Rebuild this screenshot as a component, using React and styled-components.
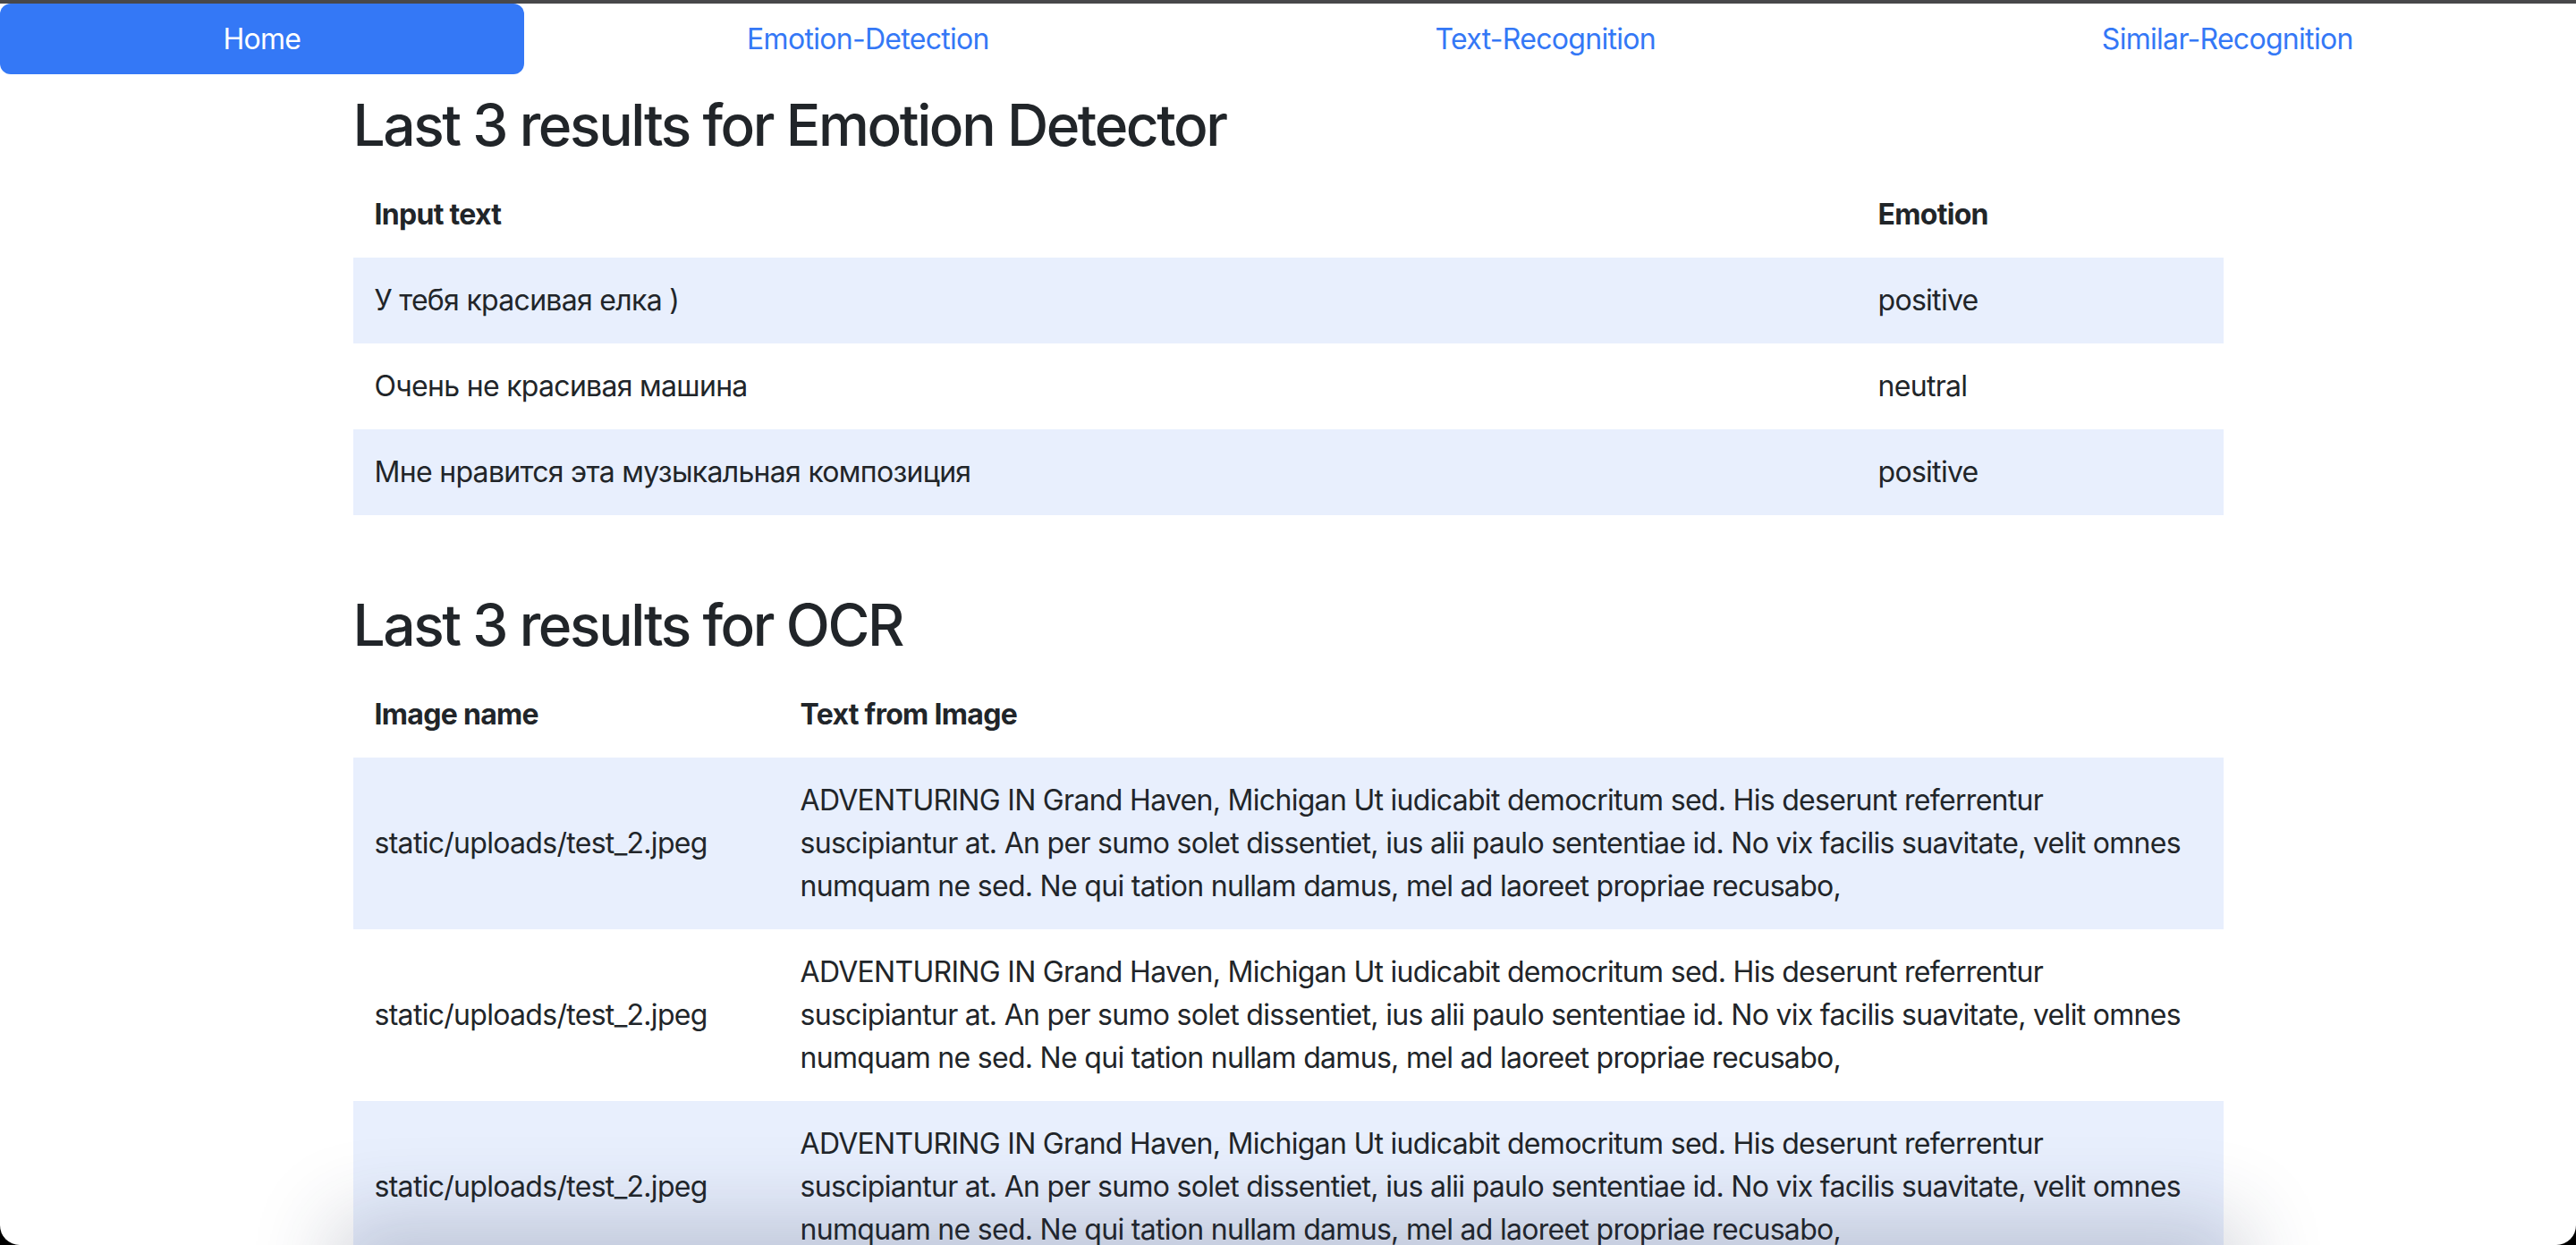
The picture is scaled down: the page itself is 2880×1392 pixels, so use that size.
import React from 'react';
import styled, { createGlobalStyle } from 'styled-components';

const GlobalStyle = createGlobalStyle`
  html, body {
    margin: 0;
    padding: 0;
    background: #ffffff;
  }
  body {
    font-family: Inter, "Noto Sans", "Liberation Sans", sans-serif;
    font-size: 32px;
    line-height: 48px;
    letter-spacing: -0.7px;
    color: #212529;
  }
`;

const Page = styled.div`
  min-height: 1392px;
  border-top: 4px solid #48484a;
  box-sizing: border-box;
`;

const Nav = styled.nav`
  display: flex;
`;

const NavItem = styled.a`
  flex: 1 1 auto;
  text-align: center;
  padding: 16px 32px;
  font-size: 32px;
  line-height: 47px;
  text-decoration: none;
  border-radius: 12px;
  color: ${(p) => (p.active ? '#ffffff' : '#3478f6')};
  background: ${(p) => (p.active ? '#3478f6' : 'transparent')};
`;

const Container = styled.main`
  width: 2091px;
  margin: 0 auto;
`;

const Title = styled.h2`
  font-size: 64px;
  font-weight: 500;
  line-height: 77px;
  letter-spacing: -2.4px;
  margin: ${(p) => p.top}px 0 14px;
`;

const Table = styled.table`
  width: 100%;
  border-collapse: collapse;
  margin-bottom: 84px;
`;

const Th = styled.th`
  text-align: left;
  font-weight: 700;
  padding: 24px;
  width: ${(p) => p.w || 'auto'};
`;

const Row = styled.tr`
  background: ${(p) => (p.striped ? '#e8effd' : '#ffffff')};
`;

const Td = styled.td`
  padding: 24px;
  vertical-align: middle;
`;

const Line = styled.span`
  display: block;
  white-space: nowrap;
`;

const emotions = [
  ['У тебя красивая елка )', 'positive'],
  ['Очень не красивая машина', 'neutral'],
  ['Мне нравится эта музыкальная композиция', 'positive'],
];

// the OCR text as it wraps in the cell
const ocrLines = [
  'ADVENTURING IN Grand Haven, Michigan Ut iudicabit democritum sed. His deserunt referrentur',
  'suscipiantur at. An per sumo solet dissentiet, ius alii paulo sententiae id. No vix facilis suavitate, velit omnes',
  'numquam ne sed. Ne qui tation nullam damus, mel ad laoreet propriae recusabo,',
];

const ocr = [
  ['static/uploads/test_2.jpeg', ocrLines],
  ['static/uploads/test_2.jpeg', ocrLines],
  ['static/uploads/test_2.jpeg', ocrLines],
];

const BottomShade = styled.div`
  position: fixed;
  left: 14%;
  right: 14%;
  bottom: -60px;
  height: 60px;
  box-shadow: 0 0 90px 30px rgba(40, 50, 80, 0.22);
  pointer-events: none;
`;

const WindowFrame = styled.div`
  position: fixed;
  inset: 0;
  border-bottom-left-radius: 22px;
  border-bottom-right-radius: 22px;
  box-shadow: 0 0 0 60px #000000;
  pointer-events: none;
`;

function App() {
  return (
    <>
      <GlobalStyle />
      <Page>
        <Nav>
          <NavItem active href="#">Home</NavItem>
          <NavItem href="#">Emotion-Detection</NavItem>
          <NavItem href="#">Text-Recognition</NavItem>
          <NavItem href="#">Similar-Recognition</NavItem>
        </Nav>

        <Container>
          <Title top={18}>Last 3 results for Emotion Detector</Title>
          <Table>
            <thead>
              <Row>
                <Th>Input text</Th>
                <Th w="362px">Emotion</Th>
              </Row>
            </thead>
            <tbody>
              {emotions.map(([text, emo], i) => (
                <Row key={i} striped={i % 2 === 0}>
                  <Td>{text}</Td>
                  <Td>{emo}</Td>
                </Row>
              ))}
            </tbody>
          </Table>

          <Title top={0}>Last 3 results for OCR</Title>
          <Table>
            <thead>
              <Row>
                <Th w="428px">Image name</Th>
                <Th>Text from Image</Th>
              </Row>
            </thead>
            <tbody>
              {ocr.map(([name, lines], i) => (
                <Row key={i} striped={i % 2 === 0}>
                  <Td>{name}</Td>
                  <Td>
                    {lines.map((l, j) => (
                      <Line key={j}>{l}</Line>
                    ))}
                  </Td>
                </Row>
              ))}
            </tbody>
          </Table>
        </Container>
      </Page>
      <BottomShade />
      <WindowFrame />
    </>
  );
}

export default App;
